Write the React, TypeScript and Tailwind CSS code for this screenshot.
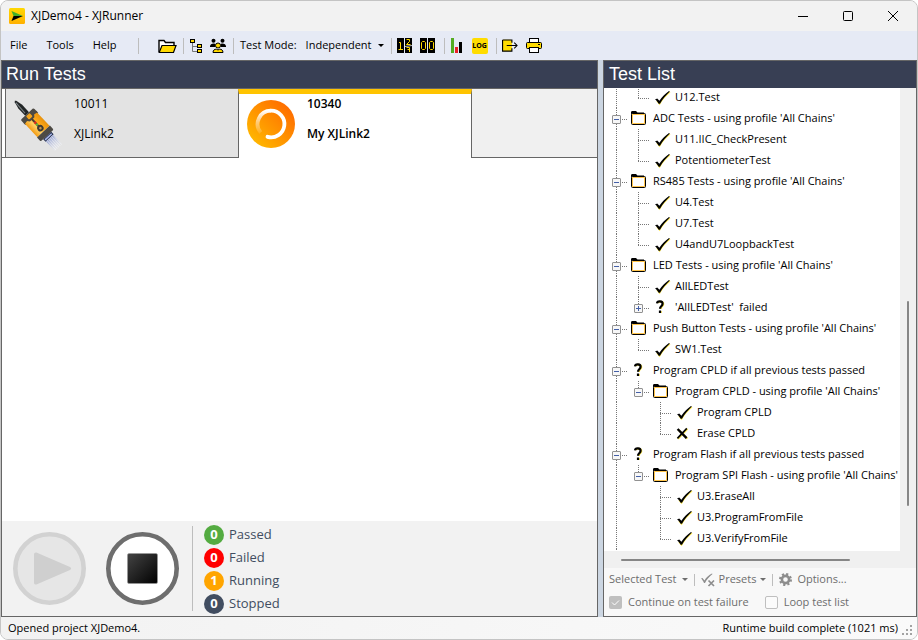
import type { ReactNode } from 'react'

type IconName = 'check' | 'folder' | 'question' | 'cross'

interface TreeRow {
  level: 0 | 1 | 2
  icon: IconName
  label: string
  toggle?: 'open' | 'closed'
  last?: boolean
}

const rows: TreeRow[] = [
  { level: 1, icon: 'check', label: 'U12.Test', last: true },
  { level: 0, icon: 'folder', label: "ADC Tests - using profile 'All Chains'", toggle: 'open' },
  { level: 1, icon: 'check', label: 'U11.IIC_CheckPresent' },
  { level: 1, icon: 'check', label: 'PotentiometerTest', last: true },
  { level: 0, icon: 'folder', label: "RS485 Tests - using profile 'All Chains'", toggle: 'open' },
  { level: 1, icon: 'check', label: 'U4.Test' },
  { level: 1, icon: 'check', label: 'U7.Test' },
  { level: 1, icon: 'check', label: 'U4andU7LoopbackTest', last: true },
  { level: 0, icon: 'folder', label: "LED Tests - using profile 'All Chains'", toggle: 'open' },
  { level: 1, icon: 'check', label: 'AllLEDTest' },
  { level: 1, icon: 'question', label: "'AllLEDTest'  failed", toggle: 'closed', last: true },
  { level: 0, icon: 'folder', label: "Push Button Tests - using profile 'All Chains'", toggle: 'open' },
  { level: 1, icon: 'check', label: 'SW1.Test', last: true },
  { level: 0, icon: 'question', label: 'Program CPLD if all previous tests passed', toggle: 'open' },
  { level: 1, icon: 'folder', label: "Program CPLD - using profile 'All Chains'", toggle: 'open', last: true },
  { level: 2, icon: 'check', label: 'Program CPLD' },
  { level: 2, icon: 'cross', label: 'Erase CPLD', last: true },
  { level: 0, icon: 'question', label: 'Program Flash if all previous tests passed', toggle: 'open' },
  { level: 1, icon: 'folder', label: "Program SPI Flash - using profile 'All Chains'", toggle: 'open', last: true },
  { level: 2, icon: 'check', label: 'U3.EraseAll' },
  { level: 2, icon: 'check', label: 'U3.ProgramFromFile' },
  { level: 2, icon: 'check', label: 'U3.VerifyFromFile', last: true },
]

const counts = [
  { name: 'Passed', value: 0, color: 'bg-[#54ab41]' },
  { name: 'Failed', value: 0, color: 'bg-[#ff0000]' },
  { name: 'Running', value: 1, color: 'bg-[#ffa500]' },
  { name: 'Stopped', value: 0, color: 'bg-[#414d60]' },
]

function RowIcon({ name }: { name: IconName }) {
  return (
    <svg width="22" height="21" viewBox="0 0 22 21" className="shrink-0" aria-hidden="true">
      {name === 'folder' && (
        <>
          <path d="M4 6.5V4.500C4 3.500 4.500 3 5.500 3H9L10.500 4.500H17V6.500H4z" fill="#000" />
          <rect x="4.5" y="5.5" width="14" height="11" rx="1" fill="#fff" stroke="#000" />
          <rect x="5.5" y="6.5" width="12" height="9" fill="none" stroke="#ffc54d" />
        </>
      )}
      {name === 'check' && (
        <>
          <path d="M8 14L10.600 17C13 12.500 16.500 8.500 21 5" fill="none" stroke="#ffe94a" strokeWidth="1.400" />
          <path d="M6 12.400L8.200 11.600L10.400 13.800C13 10 16 7 20 4L20.800 4.600C16.800 8.500 13.800 12 11 16.800H9.600C8.800 15 7.600 13.400 6 12.400z" fill="#000" />
        </>
      )}
      {name === 'question' && (
        <>
          <path d="M8.6 6.1C9 4.1 14.4 3.900 14.3 7.100C14.2 9.300 11.9 9.100 11.9 11.900M11.8 13.900V16.1" fill="none" stroke="#ffe94a" strokeWidth="2" />
          <path d="M8 6.300C8.3 3.500 13.8 3.700 13.6 6.900C13.4 9.300 11 9.300 11 11.700M11 13.500V16" fill="none" stroke="#000" strokeWidth="2.200" />
        </>
      )}
      {name === 'cross' && (
        <>
          <path d="M7.2 6.600L16.4 15.600M16.4 5.800L7 15.800" fill="none" stroke="#ffe94a" strokeWidth="2" />
          <path d="M6.6 6L15.6 15.200" fill="none" stroke="#000" strokeWidth="2.400" />
          <path d="M15.8 5.400L6.4 15.400" fill="none" stroke="#000" strokeWidth="1.600" />
        </>
      )}
    </svg>
  )
}

/* One indent step of the tree, with its dotted guide lines */
function Guide({ up, down, across }: { up?: boolean; down?: boolean; across?: boolean }) {
  return (
    <svg width="22" height="21" viewBox="0 0 22 21" className="shrink-0" aria-hidden="true">
      <g stroke="#777" strokeDasharray="1 1" shapeRendering="crispEdges">
        {up && <path d="M11.5 0V11" />}
        {down && <path d="M11.5 12V21" />}
        {across && <path d="M11 11.5H22" />}
      </g>
    </svg>
  )
}

function Toggle({ row }: { row: TreeRow }) {
  return (
    <button
      aria-label={row.toggle === 'open' ? `Collapse ${row.label}` : `Expand ${row.label}`}
      className="absolute top-[7px] left-[7px] size-[9px]"
    >
      <svg width="9" height="9" viewBox="0 0 9 9">
        <rect x="0.5" y="0.5" width="8" height="8" rx="0.5" fill="#f7f7f7" stroke="#919191" />
        <path d="M2 4.5H7" stroke="#4460a8" />
        {row.toggle === 'closed' && <path d="M4.5 2V7" stroke="#4460a8" />}
      </svg>
    </button>
  )
}

function TreeItem({ row }: { row: TreeRow }) {
  return (
    <li className="flex h-[21px] items-center whitespace-pre">
      {row.level > 0 && <Guide up down />}
      {row.level > 1 && <Guide />}
      <span className="relative shrink-0">
        <Guide up across down={!row.last} />
        {row.toggle && <Toggle row={row} />}
      </span>
      <RowIcon name={row.icon} />
      <span className="ml-1">{row.label}</span>
    </li>
  )
}

function Separator({ className = '' }: { className?: string }) {
  return <span className={`h-4 w-px shrink-0 bg-[#bdbdbd] ${className}`} />
}

function Caret() {
  return (
    <svg width="6" height="3" viewBox="0 0 6 3" className="shrink-0" aria-hidden="true">
      <path d="M0 0H6L3 3z" fill="currentColor" />
    </svg>
  )
}

function ToolButton({ label, children }: { label: string; children: ReactNode }) {
  return (
    <button aria-label={label} className="shrink-0">
      {children}
    </button>
  )
}

function Toolbar() {
  return (
    <div className="flex h-[29px] shrink-0 items-center bg-[#e6eaf5] pl-[9px]">
      <nav className="flex w-32 shrink-0 gap-[19px]">
        <button>File</button>
        <button>Tools</button>
        <button>Help</button>
      </nav>
      <Separator />
      <div className="ml-[19px] flex items-center gap-[6px]">
        <ToolButton label="Open project">
          <svg width="19" height="16" viewBox="0 0 19 16">
            <path d="M1 14V2.5H6L7.5 4.5H16V7" fill="#fff" stroke="#000" strokeWidth="1.4" />
            <path d="M4 7.5H18L15.5 14.5H1.2z" fill="#ffd900" stroke="#000" strokeWidth="1.2" />
          </svg>
        </ToolButton>
        <Separator />
        <ToolButton label="Project tree">
          <svg width="13" height="16" viewBox="0 0 13 16">
            <path d="M2.500 4V13.500H7M2.500 8.500H7" fill="none" stroke="#777" />
            <rect x="0.500" y="1.500" width="4" height="3" fill="#ffd900" stroke="#000" />
            <rect x="7.500" y="6.500" width="4" height="3" fill="#ffd900" stroke="#000" />
            <rect x="7.500" y="11.500" width="4" height="3" fill="#ffd900" stroke="#000" />
          </svg>
        </ToolButton>
        <ToolButton label="Users">
          <svg width="18" height="16" viewBox="0 0 18 16">
            <circle cx="4.500" cy="2.800" r="2" />
            <circle cx="13.500" cy="2.800" r="2" />
            <path d="M1 8.500C1 6.500 2.500 5.500 5 5.500L6.500 6V9H1zM17 8.500C17 6.500 15.500 5.500 13 5.500L11.500 6V9H17z" />
            <circle cx="9" cy="7.500" r="2.500" fill="#ffd900" stroke="#000" />
            <path d="M4 14.500C4 12 5.500 11.200 7.500 11.200L9 12L10.500 11.200C12.500 11.200 14 12 14 14.500z" fill="#ffd900" stroke="#000" />
          </svg>
        </ToolButton>
        <Separator />
        <label htmlFor="mode">Test Mode:</label>
      </div>
      <div className="relative ml-[9px] flex items-center">
        <select id="mode" className="w-20 appearance-none">
          <option>Independent</option>
        </select>
        <span className="pointer-events-none absolute right-0.5">
          <Caret />
        </span>
      </div>
      <div className="ml-[5px] flex items-center gap-2">
        <Separator className="-mr-[3px]" />
        <ToolButton label="Counter">
          <svg width="15" height="15" viewBox="0 0 15 15">
            <path d="M0 0H7V15H0zM8 0H15V15H8z" />
            <path d="M2 4.500H3.500V11M1.500 11.500H6M9.500 1.500H12.500V3.500L9.500 6.500H13.500M9.500 9.500H12.500V14M10.500 11.500H12.500" fill="none" stroke="#ffd900" />
            <path d="M8 8.500L15 7.500" stroke="#e6eaf5" strokeWidth="0.800" />
          </svg>
        </ToolButton>
        <ToolButton label="Reset counter">
          <svg width="16" height="15" viewBox="0 0 16 15">
            <path d="M0 0H7V15H0zM8 0H15V15H8z" />
            <path d="M1.500 4.500L2.500 3.500H4.500L5.500 4.500V10.500L4.500 11.500H2.500L1.500 10.500zM9.500 4.500L10.500 3.500H12.500L13.500 4.500V10.500L12.500 11.500H10.500L9.500 10.500z" fill="none" stroke="#ffd900" />
          </svg>
        </ToolButton>
        <Separator className="-mr-[3px]" />
        <ToolButton label="Statistics">
          <svg width="14" height="15" viewBox="0 0 14 15">
            <path d="M1 0H4V15H1z" fill="#54ab22" />
            <path d="M5 9H8V15H5z" fill="#e8202a" />
            <path d="M9 4H12V15H9z" />
          </svg>
        </ToolButton>
        <ToolButton label="Show log">
          <span className="flex size-4 items-center justify-center rounded-xs bg-[#ffdc00] text-[7px] leading-none font-bold">
            LOG
          </span>
        </ToolButton>
        <Separator className="-mr-[3px]" />
        <ToolButton label="Log out">
          <svg width="16" height="15" viewBox="0 0 17 15">
            <path d="M10.500 4V3L9 1.500H1.500L0.500 2.500V12.500L1.500 13.500H9L10.500 12.500V11" fill="#ffdc00" />
            <path d="M0.600 1.600H10.500V4.500M10.500 10.500V13.500H0.600V1.600" fill="none" stroke="#000" strokeWidth="1.200" />
            <path d="M5 7.500H15.500M13 4.500L16 7.500L13 10.500" fill="none" stroke="#000" strokeWidth="1.100" />
          </svg>
        </ToolButton>
        <ToolButton label="Print">
          <svg width="16" height="15" viewBox="0 0 16 15">
            <rect x="0.500" y="4.500" width="15" height="6" rx="1" fill="#ffdc00" stroke="#000" />
            <rect x="3.500" y="0.500" width="9" height="4" fill="#fff" stroke="#000" />
            <rect x="3.500" y="9.500" width="9" height="5" fill="#fff" stroke="#000" />
            <path d="M12 6.500H14" stroke="#000" />
          </svg>
        </ToolButton>
      </div>
    </div>
  )
}

function TitleBar() {
  return (
    <header className="flex h-[30px] shrink-0 items-center bg-[#f2f2f2] pl-2">
      <svg width="16" height="16" viewBox="0 0 16 16" aria-hidden="true">
        <defs>
          <linearGradient id="app" x1="0" y1="0" x2="0" y2="1">
            <stop offset="0" stopColor="#ffd800" />
            <stop offset="1" stopColor="#ffb000" />
          </linearGradient>
        </defs>
        <rect width="16" height="16" rx="1.500" fill="url(#app)" />
        <path d="M2.500 3L14 8H4.500z" fill="#3fae2a" />
        <path d="M4.500 8H14L2.500 13z" fill="#000" />
      </svg>
      <h1 className="ml-[6px] grow text-xs">XJDemo4 - XJRunner</h1>
      <div className="flex pr-0.5">
        <button aria-label="Minimize" className="flex w-[45px] justify-center">
          <svg width="10" height="10" viewBox="0 0 10 10"><path d="M0 5.500H10" stroke="#000" /></svg>
        </button>
        <button aria-label="Maximize" className="flex w-[45px] justify-center">
          <svg width="10" height="10" viewBox="0 0 10 10"><rect x="0.500" y="0.500" width="9" height="9" rx="1" fill="none" stroke="#000" /></svg>
        </button>
        <button aria-label="Close" className="flex w-[45px] justify-center">
          <svg width="10" height="10" viewBox="0 0 10 10"><path d="M0 0L10 10M10 0L0 10" stroke="#000" /></svg>
        </button>
      </div>
    </header>
  )
}

/* JTAG probe, drawn pointing up and then tilted */
function ProbeIcon() {
  return (
    <svg width="48" height="56" viewBox="0 0 48 56" className="shrink-0" aria-hidden="true">
      <defs>
        <linearGradient id="body" x1="0" y1="0" x2="1" y2="0">
          <stop offset="0" stopColor="#f29a12" />
          <stop offset="0.350" stopColor="#ffd064" />
          <stop offset="0.600" stopColor="#ffab1c" />
          <stop offset="1" stopColor="#e8920c" />
        </linearGradient>
        <linearGradient id="cable" x1="0" y1="0" x2="0" y2="1">
          <stop offset="0" stopColor="#8f9ccc" />
          <stop offset="1" stopColor="#dde0ec" stopOpacity="0.200" />
        </linearGradient>
        <pattern id="mesh" width="2" height="2" patternUnits="userSpaceOnUse">
          <rect width="1" height="2" fill="#fff" fillOpacity="0.500" />
        </pattern>
      </defs>
      <g transform="translate(1.500 6.500) rotate(-43)">
        <path d="M-1 0L0 -1L1 0L2.600 7V17H-2.600V7z" fill="#222526" />
        <path d="M-0.500 1L-1 15" stroke="#7d8588" />
        <path d="M-8.800 18.500C-8.800 17.500 -8.300 17 -7.500 17H7.500C8.300 17 8.800 17.500 8.800 18.500V24H-8.800z" fill="#4d4a44" />
        <rect x="-8.300" y="22" width="16.600" height="19" fill="url(#body)" />
        <path d="M-8.800 23L-5 22L-3 24.500H3L5 22L8.800 23V21H-8.800z" fill="#4d4a44" />
        <rect x="-2.500" y="18" width="5" height="4.500" rx="1" fill="#f5a41b" />
        <path d="M-1 24H1V36H-1z" fill="#4a4032" />
        <circle cx="0" cy="29" r="1.300" fill="#e02b20" />
        <circle cx="0" cy="31.500" r="1.200" fill="#5cba3c" />
        <circle cx="0" cy="36.500" r="3.200" fill="#3f3a33" />
        <circle cx="0" cy="36.500" r="1.300" fill="#c39a4e" />
        <path d="M-8.800 41H8.800V45C8.800 46 8.300 46.500 7.500 46.500H-7.500C-8.300 46.500 -8.800 46 -8.800 45z" fill="#4d4a44" />
        <rect x="-5.500" y="46.500" width="11" height="3.500" fill="#26304f" />
        <rect x="-4.500" y="47.500" width="9" height="1.500" fill="#a9b7e8" />
        <rect x="-5" y="50" width="10" height="13" fill="url(#cable)" />
        <rect x="-5" y="50" width="10" height="13" fill="url(#mesh)" />
      </g>
    </svg>
  )
}

function SpinnerIcon() {
  return (
    <svg width="48" height="48" viewBox="0 0 48 48" className="shrink-0" aria-hidden="true">
      <defs>
        <linearGradient id="disc" x1="0" y1="1" x2="1" y2="0">
          <stop offset="0.100" stopColor="#ffb900" />
          <stop offset="0.900" stopColor="#ff6a00" />
        </linearGradient>
        <linearGradient id="fade" x1="0" y1="1" x2="0" y2="0">
          <stop offset="0" stopColor="#fff" stopOpacity="0.150" />
          <stop offset="0.500" stopColor="#fff" stopOpacity="0.500" />
          <stop offset="1" stopColor="#fff" />
        </linearGradient>
      </defs>
      <circle cx="24" cy="24" r="24" fill="url(#disc)" />
      <path d="M13.700 32.500A13.300 13.300 0 0 1 24 10.700" fill="none" stroke="url(#fade)" strokeWidth="3.800" />
      <path d="M24 10.700A13.300 13.300 0 1 1 20.500 36.800" fill="none" stroke="#fff" strokeWidth="3.800" strokeLinecap="round" />
    </svg>
  )
}

function RunTests() {
  return (
    <section className="flex min-w-0 grow flex-col border border-[#666] bg-white">
      <h2 className="h-[27px] shrink-0 bg-[#383f54] pl-1 font-['Liberation_Sans',sans-serif] text-lg leading-[26px] text-white">
        Run Tests
      </h2>
      <div className="flex h-[70px] shrink-0 border-t border-[#666] bg-[#f0f0f0] text-xs">
        <span className="w-[3px] border-b border-[#666] bg-white" />
        <button className="flex w-[233px] gap-3 border-b border-l border-[#666] bg-[#e3e3e3] pt-[6px] pl-2 text-left">
          <ProbeIcon />
          <span className="flex flex-col gap-3 leading-[18px]">
            <span>10011</span>
            <span>XJLink2</span>
          </span>
        </button>
        <button className="flex w-[234px] gap-3 border-t-5 border-r border-l border-[#666] border-t-[#ffc400] bg-white pt-px pl-2 text-left font-semibold">
          <span className="pt-[5px]">
            <SpinnerIcon />
          </span>
          <span className="flex flex-col gap-3 leading-[18px]">
            <span>10340</span>
            <span>My XJLink2</span>
          </span>
        </button>
        <span className="grow border-b border-[#666]" />
      </div>
      <div className="grow" />
      <div className="flex h-[95px] shrink-0 items-center bg-[#f2f2f2] pl-[11px]">
        <button aria-label="Run" disabled>
          <svg width="73" height="73" viewBox="0 0 73 73">
            <circle cx="36.500" cy="36.500" r="34.200" fill="#e6e6e6" stroke="#d2d2d2" strokeWidth="4.600" />
            <path d="M21 22.500C21 20.500 22.500 20 24 20.700L57 35C58.500 35.800 58.500 37.200 57 38L24 52.300C22.500 53 21 52.500 21 50.500z" fill="#cfcfcf" />
          </svg>
        </button>
        <button aria-label="Stop" className="ml-5">
          <svg width="73" height="73" viewBox="0 0 73 73">
            <defs>
              <linearGradient id="stop" x1="0" y1="0" x2="1" y2="1">
                <stop offset="0" stopColor="#444" />
                <stop offset="1" stopColor="#000" />
              </linearGradient>
            </defs>
            <circle cx="36.500" cy="36.500" r="34.200" fill="#fff" stroke="#6e6e6e" strokeWidth="4.600" />
            <rect x="21.500" y="21.500" width="30" height="30" rx="1.500" fill="url(#stop)" stroke="#999" strokeWidth="0.600" />
          </svg>
        </button>
        <ul className="ml-[13px] border-l border-[#bdbdbd] pl-[11px] text-[13px] text-[#414d60]">
          {counts.map((count) => (
            <li key={count.name} className="flex h-[23px] items-center first:-mt-[3px] last:-mb-1">
              <span className={`${count.color} mr-[5px] flex size-5 items-center justify-center rounded-full font-bold text-white`}>
                {count.value}
              </span>
              {count.name}
            </li>
          ))}
        </ul>
      </div>
    </section>
  )
}

function TestList() {
  return (
    <section className="flex w-[314px] shrink-0 flex-col border border-[#666] bg-[#f0f0f0]">
      <h2 className="h-[27px] shrink-0 bg-[#383f54] pl-[5px] font-['Liberation_Sans',sans-serif] text-lg leading-[26px] text-white">
        Test List
      </h2>
      <div className="flex min-h-0 grow">
        <div className="min-w-0 grow overflow-hidden bg-white pl-px">
          <ul className="-mt-px">
            {rows.map((row, i) => (
              <TreeItem key={i} row={row} />
            ))}
            <li><Guide up down /></li>
          </ul>
        </div>
        <div className="flex w-4 shrink-0 flex-col items-center pt-[213px]">
          <span className="h-[205px] w-0.5 rounded bg-[#868686]" />
        </div>
      </div>
      <div className="flex h-[17px] shrink-0 items-center pl-[17px]">
        <span className="h-0.5 w-[229px] rounded bg-[#868686]" />
      </div>
      <div className="flex h-12 shrink-0 flex-col bg-[#f8f8f8] pl-[5px] text-[#6d6d6d]">
        <div className="flex h-[23px] items-center">
          <button disabled className="flex items-center gap-[5px]">Selected Test <Caret /></button>
          <span className="mx-[6px] h-3 w-px bg-[#bdbdbd]" />
          <button disabled className="flex items-center gap-1">
            <svg width="14" height="14" viewBox="0 0 14 14" aria-hidden="true">
              <path d="M0 5.500L1.500 5L3.500 7.500C5 4.500 8 2 11 0.500L11.500 1C8.500 3.500 5.500 6.500 4 10H3C2.200 8 1.200 6.500 0 5.500z" fill="#8d8d8d" />
              <path d="M7.500 7.500L13 13M13 7.500L7.500 13" stroke="#8d8d8d" strokeWidth="1.700" />
            </svg>
            Presets <Caret />
          </button>
          <span className="mx-[6px] h-3 w-px bg-[#bdbdbd]" />
          <button disabled className="flex items-center gap-[5px]">
            <svg width="13" height="13" viewBox="0 0 13 13" aria-hidden="true">
              <circle cx="6.500" cy="6.500" r="3.600" fill="none" stroke="#8d8d8d" strokeWidth="2.600" />
              <circle cx="6.500" cy="6.500" r="5.500" fill="none" stroke="#8d8d8d" strokeWidth="2" strokeDasharray="2.160 2.160" />
            </svg>
            Options...
          </button>
        </div>
        <div className="flex h-[23px] items-center">
          <label className="flex items-center gap-[6px]">
            <input type="checkbox" defaultChecked disabled className="size-[13px] appearance-none rounded-xs bg-[#bfbfbf]" />
            <svg width="13" height="13" viewBox="0 0 13 13" className="-ml-[19px]" aria-hidden="true">
              <path d="M3 6.500L5.500 9L10 4.500" fill="none" stroke="#fff" />
            </svg>
            Continue on test failure
          </label>
          <label className="ml-4 flex items-center gap-[6px]">
            <input type="checkbox" disabled className="size-[13px] appearance-none rounded-xs border border-[#bfbfbf] bg-[#fbfbfb]" />
            Loop test list
          </label>
        </div>
      </div>
    </section>
  )
}

export default function App() {
  return (
    <div className="flex h-screen flex-col overflow-hidden rounded-lg border border-[#c4c4c4] bg-[#f2f2f2] font-['Open_Sans',sans-serif] text-[11px] text-black">
      <TitleBar />
      <Toolbar />
      <main className="flex min-h-0 grow gap-[5px] bg-[#ccd6e2]">
        <RunTests />
        <TestList />
      </main>
      <footer className="flex h-[22px] shrink-0 items-center bg-linear-to-r from-[#f2f2f2] to-[#fafafa] pl-[7px]">
        <span className="grow">Opened project XJDemo4.</span>
        <span>Runtime build complete (1021 ms)</span>
        <svg width="11" height="11" viewBox="0 0 11 11" className="mx-1 mt-1" aria-hidden="true">
          <path d="M8 0H10V2H8zM4 4H6V6H4zM8 4H10V6H8zM0 8H2V10H0zM4 8H6V10H4zM8 8H10V10H8z" fill="#a3a3a3" />
        </svg>
      </footer>
    </div>
  )
}
